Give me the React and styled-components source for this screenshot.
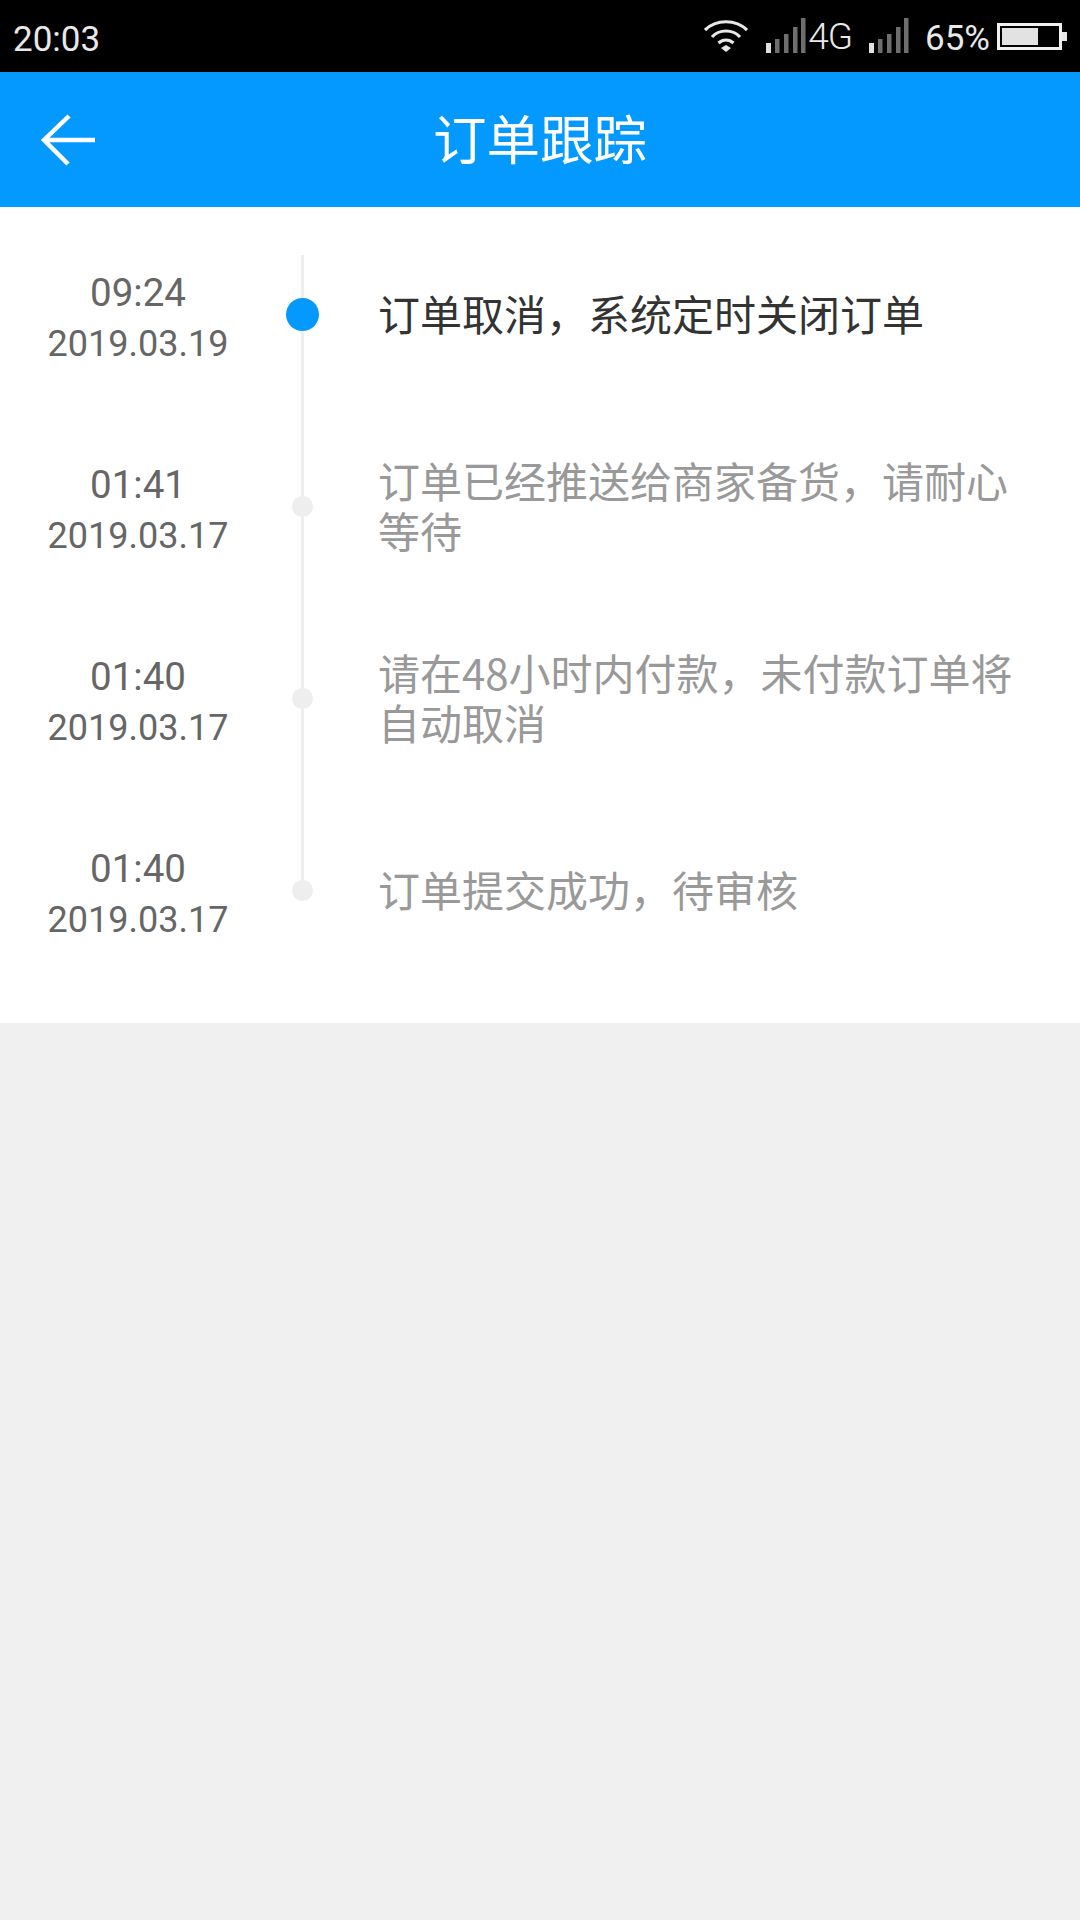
import React from "react";
import styled, { createGlobalStyle } from "styled-components";

const GlobalStyle = createGlobalStyle`
	html, body {
		margin: 0;
		padding: 0;
		background: #f0f0f0;
	}
	body {
		font-family: Roboto, "Noto Sans CJK SC", sans-serif;
	}
`;

const Page = styled.div`
	width: 1080px;
	height: 1920px;
	background: #f0f0f0;
	overflow: hidden;
`;

// Status bar
const StatusBar = styled.div`
	height: 72px;
	background: #000;
	display: flex;
	align-items: center;
	justify-content: space-between;
	padding: 0 13px 0 13px;
	color: #e8e8e8;
`;

const Clock = styled.span`
	font-size: 35px;
	font-weight: 400;
	margin-top: 6px;
`;

const StatusRight = styled.div`
	display: flex;
	align-items: center;
`;

const NetworkLabel = styled.span`
	font-size: 37px;
	font-weight: 300;
	margin-right: 17px;
	margin-top: 1px;
	letter-spacing: -1px;
`;

const Percent = styled.span`
	font-size: 35px;
	font-weight: 400;
	margin: 4px 7px 0 16px;
`;

const IconSlot = styled.svg`
	display: block;
	flex: none;
	margin-right: ${(p) => p.$gap || 0}px;
`;

// Header
const Header = styled.header`
	height: 135px;
	background: #0499ff;
	display: flex;
	align-items: center;
	justify-content: center;
	position: relative;
`;

const BackIcon = styled.svg`
	position: absolute;
	left: 40px;
	top: 42px;
`;

const Title = styled.h1`
	margin: -7px 0 0 0;
	color: #fff;
	font-size: 53.5px;
	font-weight: 400;
	font-family: "Noto Sans CJK SC", sans-serif;
`;

// Timeline
const Timeline = styled.div`
	background: #fff;
	height: 816px;
	padding-top: 11px;
	box-sizing: border-box;
`;

const Row = styled.div`
	height: 192px;
	display: grid;
	grid-template-columns: 276px 53px 1fr;
	align-items: center;
`;

const TimeCell = styled.div`
	text-align: center;
	color: #666;
	margin-top: 8px;
`;

const Time = styled.div`
	font-size: 38.5px;
	line-height: 50px;
`;

const DateText = styled.div`
	font-size: 36px;
	line-height: 50px;
	margin-top: 1px;
`;

const Rail = styled.div`
	height: 100%;
	position: relative;
	display: flex;
	align-items: center;
	justify-content: center;

	&::before {
		content: "";
		position: absolute;
		left: 25px;
		width: 3px;
		background: #eeeeee;
		top: ${(p) => (p.$first ? "37px" : "0")};
		bottom: ${(p) => (p.$last ? "96px" : "0")};
	}
`;

const Dot = styled.span`
	position: relative;
	width: ${(p) => (p.$active ? 33 : 21)}px;
	height: ${(p) => (p.$active ? 33 : 21)}px;
	border-radius: 50%;
	background: ${(p) => (p.$active ? "#0499ff" : "#eeeeee")};
`;

const Message = styled.div`
	margin-left: 49px;
	width: 650px;
	margin-top: -2px;
	font-family: "Noto Sans CJK SC", sans-serif;
	font-size: 42px;
	line-height: 50px;
	color: ${(p) => (p.$active ? "#333" : "#999")};
`;

const events = [
	{ time: "09:24", date: "2019.03.19", text: "订单取消，系统定时关闭订单" },
	{ time: "01:41", date: "2019.03.17", text: "订单已经推送给商家备货，请耐心等待" },
	{ time: "01:40", date: "2019.03.17", text: "请在48小时内付款，未付款订单将自动取消" },
	{ time: "01:40", date: "2019.03.17", text: "订单提交成功，待审核" },
];

const Signal = ({ gap }) => (
	<IconSlot $gap={gap} width="40" height="36" viewBox="0 0 40 36">
		<rect x="0" y="25" width="5" height="10" fill="#e0e0e0" />
		<rect x="9" y="21" width="4.5" height="14" fill="#6e6e6e" />
		<rect x="18" y="16" width="4.5" height="19" fill="#6e6e6e" />
		<rect x="27" y="9" width="4.5" height="26" fill="#6e6e6e" />
		<rect x="35" y="0" width="4.5" height="35" fill="#6e6e6e" />
	</IconSlot>
);

const App = () => {
	return (
		<Page>
			<GlobalStyle />
			<StatusBar>
				<Clock>20:03</Clock>
				<StatusRight>
					<IconSlot $gap={18} width="44" height="36" viewBox="0 0 44 36">
						<g fill="none" stroke="#e8e8e8" strokeWidth="3.2">
							<path d="M1 12 C12 1 32 1 43 12" />
							<path d="M8 19 C15 11 29 11 36 19" />
							<path d="M14.5 25 C19 21 25 21 29.5 25" />
						</g>
						<path d="M17 30 L22 27 L27 30 L22 34 Z" fill="#e8e8e8" />
					</IconSlot>
					<Signal gap={2} />
					<NetworkLabel>4G</NetworkLabel>
					<Signal />
					<Percent>65%</Percent>
					<IconSlot width="70" height="29" viewBox="0 0 70 29">
						<rect x="1.5" y="2.5" width="62" height="24" fill="none" stroke="#f0f0f0" strokeWidth="3" />
						<rect x="5" y="6" width="36" height="17" fill="#e2e2e2" />
						<rect x="65" y="10" width="5" height="9" fill="#e8e8e8" />
					</IconSlot>
				</StatusRight>
			</StatusBar>
			<Header>
				<BackIcon width="56" height="52" viewBox="0 0 56 52">
					<path d="M55 26 H4 M29 2 L4 26 L28 50" fill="none" stroke="#fff" strokeWidth="4.5" />
				</BackIcon>
				<Title>订单跟踪</Title>
			</Header>
			<Timeline>
				{events.map((item, i) => (
					<Row key={i}>
						<TimeCell>
							<Time>{item.time}</Time>
							<DateText>{item.date}</DateText>
						</TimeCell>
						<Rail $first={i === 0} $last={i === events.length - 1}>
							<Dot $active={i === 0} />
						</Rail>
						<Message $active={i === 0}>{item.text}</Message>
					</Row>
				))}
			</Timeline>
		</Page>
	);
};

export default App;
